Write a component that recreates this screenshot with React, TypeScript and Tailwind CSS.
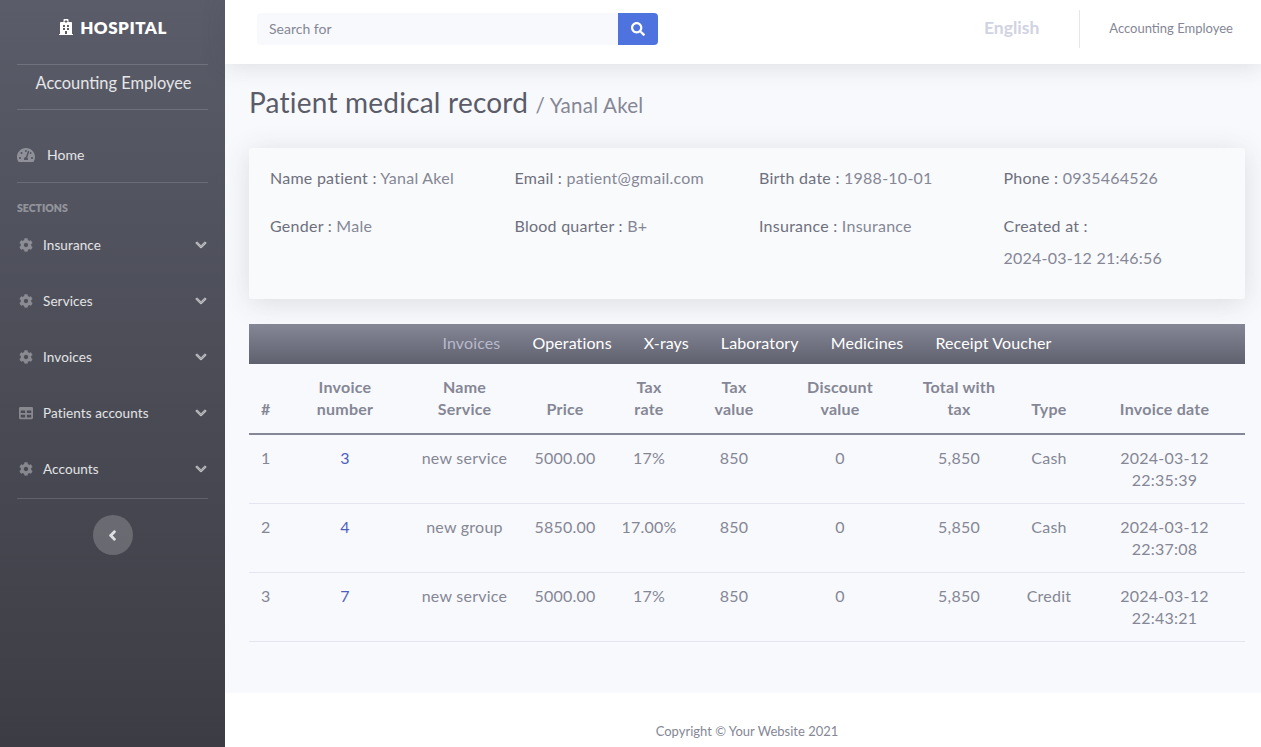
import { FaChevronDown, FaChevronLeft, FaCog, FaHospital, FaSearch, FaTable, FaTachometerAlt } from 'react-icons/fa';

const navItems = [
    { label: 'Insurance', icon: FaCog },
    { label: 'Services', icon: FaCog },
    { label: 'Invoices', icon: FaCog },
    { label: 'Patients accounts', icon: FaTable },
    { label: 'Accounts', icon: FaCog },
];

const tabs = ['Invoices', 'Operations', 'X-rays', 'Laboratory', 'Medicines', 'Receipt Voucher'];

const invoices = [
    { id: 1, number: 3, service: 'new service', price: '5000.00', rate: '17%', tax: '850', discount: '0', total: '5,850', type: 'Cash', date: '2024-03-12 22:35:39' },
    { id: 2, number: 4, service: 'new group', price: '5850.00', rate: '17.00%', tax: '850', discount: '0', total: '5,850', type: 'Cash', date: '2024-03-12 22:37:08' },
    { id: 3, number: 7, service: 'new service', price: '5000.00', rate: '17%', tax: '850', discount: '0', total: '5,850', type: 'Credit', date: '2024-03-12 22:43:21' },
];

function Info({ label, value }: { label: string; value: string }) {
    return (
        <div className="leading-6">
            {label} : <span className="text-[#858796]">{value}</span>
        </div>
    );
}

function Sidebar() {
    return (
        <aside className="w-[225px] shrink-0 px-[17px] bg-gradient-to-b from-[#5a5c69] to-[#3c3d44] text-white">
            <div className="h-[65px] flex items-start pt-[17px] justify-center gap-[6px] border-b border-white/15">
                <FaHospital className="text-[16px] mt-[2px]" />
                <span className="font-extrabold text-[17px] leading-[22px] tracking-[0.5px]">HOSPITAL</span>
            </div>
            <div className="h-[45px] flex items-center justify-center pl-[2px] pb-[8px] border-b border-white/15 text-[16.4px] text-white/85">
                Accounting Employee
            </div>
            <div className="h-[73px] flex items-center gap-[12px] pt-[17px] border-b border-white/15 text-[14px] text-white/85">
                <FaTachometerAlt className="text-[18px] text-white/35" />
                <span>Home</span>
            </div>
            <div className="pt-[19px] text-[10.5px] font-extrabold text-white/40 leading-[13px]">SECTIONS</div>
            <div className="mt-[2px] border-b border-white/15 pb-[1px]">
                {navItems.map((item) => (
                    <div key={item.label} className="h-[56px] flex items-center text-[13.5px] tracking-[0.1px] text-white/85">
                        <item.icon className="text-[14px] text-white/35 ml-[2px] mr-[10px]" />
                        <span>{item.label}</span>
                        <FaChevronDown stroke="currentColor" strokeWidth={40} className="ml-auto mr-[1px] text-[12px] text-white/50" />
                    </div>
                ))}
            </div>
            <div className="mt-[16px] flex justify-center">
                <button className="w-10 h-10 rounded-full bg-white/20 flex items-center justify-center">
                    <FaChevronLeft stroke="currentColor" strokeWidth={50} className="text-[11px] text-white/70" />
                </button>
            </div>
        </aside>
    );
}

export default function App() {
    return (
        <div className="flex h-[747px] overflow-hidden bg-[#f8f9fc] text-[#5a5c69] font-['Lato','Noto_Sans',sans-serif]">
            <Sidebar />
            <div className="flex-1 flex flex-col min-w-0">
                <header className="relative h-[64px] shrink-0 bg-white shadow-[0_2px_24px_rgba(58,59,69,0.15)] flex items-start pl-8 pr-7">
                    <div className="flex w-[401px] h-8 mt-[13px]">
                        <div className="flex-1 bg-[#f8f9fc] rounded-l text-[14px] text-[#858796] pl-3 pb-[2px] flex items-center">Search for</div>
                        <button className="w-10 bg-[#4e73df] rounded-r flex items-center justify-center text-white">
                            <FaSearch className="text-[14px]" />
                        </button>
                    </div>
                    <span className="ml-auto mt-[16px] leading-[24px] font-bold text-[17.5px] text-[#d1d3e2]">English</span>
                    <div className="w-px h-[38px] mt-[10px] bg-[#e3e6f0] ml-[40px] mr-[29px]" />
                    <span className="mt-[18px] leading-[20px] text-[13px] text-[#858796]">Accounting Employee</span>
                </header>

                <main className="flex-1 pl-6 pr-4 text-[16px] tracking-[0.25px] text-[#858796]">
                    <h1 className="mt-[20px] h-[36px] leading-[36px] text-[28px] tracking-[0.22px] text-[#5a5c69]">
                        Patient medical record <span className="text-[20.6px] text-[#858796]">/ Yanal Akel</span>
                    </h1>
                    <section className="mt-[28px] h-[151px] bg-[#f9fafc] rounded-[3px] shadow-[0_4px_28px_rgba(58,59,69,0.15)] px-[21px] pt-[18px] text-[#6e707e]">
                        <div className="grid grid-cols-[repeat(4,244.5px)] gap-y-6">
                            <Info label="Name patient" value="Yanal Akel" />
                            <Info label="Email" value="patient@gmail.com" />
                            <Info label="Birth date" value="1988-10-01" />
                            <Info label="Phone" value="0935464526" />
                            <Info label="Gender" value="Male" />
                            <Info label="Blood quarter" value="B+" />
                            <Info label="Insurance" value="Insurance" />
                            <div className="leading-6">
                                <div>Created at :</div>
                                <div className="mt-2 text-[#858796]">2024-03-12 21:46:56</div>
                            </div>
                        </div>
                    </section>

                    <nav className="mt-[25px] h-10 flex items-center justify-center gap-8 pb-[2px] tracking-[0.12px] bg-gradient-to-b from-[#858796] to-[#60616f] text-white">
                        {tabs.map((tab, i) => (
                            <span key={tab} className={i === 0 ? 'text-[#b7b9cc]' : ''}>{tab}</span>
                        ))}
                    </nav>

                    <table className="w-full table-fixed border-collapse text-center">
                        <colgroup>
                            <col className="w-[36px]" />
                            <col className="w-[120px]" />
                            <col className="w-[119px]" />
                            <col className="w-[82px]" />
                            <col className="w-[86px]" />
                            <col className="w-[84px]" />
                            <col className="w-[128px]" />
                            <col className="w-[110px]" />
                            <col className="w-[70px]" />
                            <col />
                        </colgroup>
                        <thead>
                            <tr className="border-b-2 border-[#858796] h-[70px] align-bottom font-bold leading-[22px]">
                                <th className="pb-[13px] pl-3 text-left font-bold">#</th>
                                <th className="pb-[13px] font-bold">Invoice<br />number</th>
                                <th className="pb-[13px] font-bold">Name<br />Service</th>
                                <th className="pb-[13px] font-bold">Price</th>
                                <th className="pb-[13px] font-bold">Tax<br />rate</th>
                                <th className="pb-[13px] font-bold">Tax<br />value</th>
                                <th className="pb-[13px] font-bold">Discount<br />value</th>
                                <th className="pb-[13px] font-bold">Total with<br />tax</th>
                                <th className="pb-[13px] font-bold">Type</th>
                                <th className="pb-[13px] font-bold">Invoice date</th>
                            </tr>
                        </thead>
                        <tbody>
                            {invoices.map((row) => (
                                <tr key={row.id} className="border-b border-[#e3e6f0] h-[69px] align-top leading-[22px]">
                                    <td className="pt-3 pl-3 text-left">{row.id}</td>
                                    <td className="pt-3 text-[#4e5fc0]">{row.number}</td>
                                    <td className="pt-3">{row.service}</td>
                                    <td className="pt-3">{row.price}</td>
                                    <td className="pt-3">{row.rate}</td>
                                    <td className="pt-3">{row.tax}</td>
                                    <td className="pt-3">{row.discount}</td>
                                    <td className="pt-3">{row.total}</td>
                                    <td className="pt-3">{row.type}</td>
                                    <td className="pt-3 px-[30px]">{row.date}</td>
                                </tr>
                            ))}
                        </tbody>
                    </table>
                </main>

                <footer className="h-[54px] shrink-0 bg-white flex items-center justify-center pt-[24px] pl-2 text-[13px] text-[#858796]">
                    Copyright © Your Website 2021
                </footer>
            </div>
        </div>
    );
}
